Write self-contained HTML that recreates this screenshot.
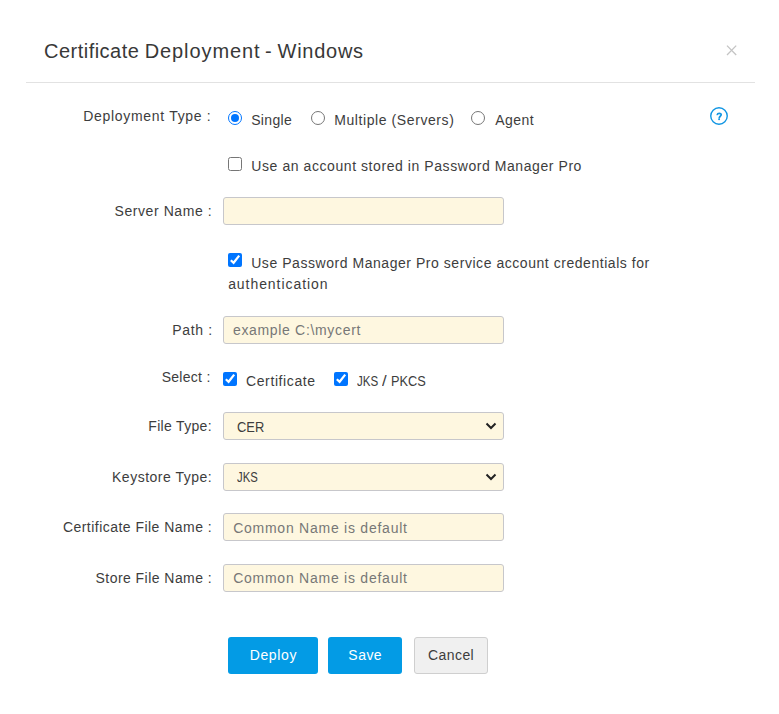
<!DOCTYPE html>
<html><head><meta charset="utf-8">
<style>
html,body{margin:0;padding:0;background:#fff;width:779px;height:714px;overflow:hidden}
body{position:relative;font-family:"Liberation Sans",sans-serif;color:#333}
.t{position:absolute;white-space:nowrap;line-height:20px;font-size:14px}
.box{position:absolute;left:223px;width:279px;height:26px;border:1px solid #c7c7cb;border-radius:3px;background:#fef7e0}
.cb{position:absolute;margin:0;width:14px;height:14px}
.btn{position:absolute;top:637px;height:37px;border-radius:3px;background:#039be5}
.sep{position:absolute;left:26px;top:82px;width:729px;height:1px;background:#e2e2e2}
</style></head><body>
<svg class="nt " style="position:absolute;left:726px;top:45px;display:block" width="11" height="11" viewBox="0 0 11 11"><path d="M1 0.6L10.2 10M10.2 0.6L1 10" stroke="#c4c4c4" stroke-width="1.3"/></svg>
<div class="nt sep"></div>
<svg class="nt " style="position:absolute;left:709.7px;top:106.9px;display:block" width="18" height="18" viewBox="0 0 18 18"><circle cx="9" cy="9" r="8.25" fill="none" stroke="#1296e3" stroke-width="1.4"/><path d="M7.3 7.5C7.5 6.1 11.3 5.8 11.2 7.7C11.1 8.9 9.6 9.3 9.3 10.7" fill="none" stroke="#1296e3" stroke-width="1.7" stroke-linecap="round"/><circle cx="9.1" cy="12.3" r="0.95" fill="#1296e3"/></svg>
<svg class="nt cb" style="left:228px;top:111px" width="14" height="14" viewBox="0 0 14 14"><circle cx="7" cy="7" r="6.5" fill="none" stroke="#0075ff" stroke-width="1"/><circle cx="7" cy="7" r="4" fill="#0075ff"/></svg>
<svg class="nt cb" style="left:311px;top:111px" width="14" height="14" viewBox="0 0 14 14"><circle cx="7" cy="7" r="6.5" fill="none" stroke="#767676" stroke-width="1"/></svg>
<svg class="nt cb" style="left:471px;top:111px" width="14" height="14" viewBox="0 0 14 14"><circle cx="7" cy="7" r="6.5" fill="none" stroke="#767676" stroke-width="1"/></svg>
<svg class="nt cb" style="left:228px;top:157px" width="14" height="14" viewBox="0 0 14 14"><rect x="0.5" y="0.5" width="13" height="13" rx="2" fill="#fff" stroke="#767676" stroke-width="1"/></svg>
<svg class="nt cb" style="left:228px;top:253px" width="14" height="14" viewBox="0 0 14 14"><rect width="14" height="14" rx="2" fill="#0075ff"/><path d="M2.8 7.2L5.6 9.8L11.2 2.6" fill="none" stroke="#fff" stroke-width="2.2"/></svg>
<svg class="nt cb" style="left:223px;top:372px" width="14" height="14" viewBox="0 0 14 14"><rect width="14" height="14" rx="2" fill="#0075ff"/><path d="M2.8 7.2L5.6 9.8L11.2 2.6" fill="none" stroke="#fff" stroke-width="2.2"/></svg>
<svg class="nt cb" style="left:334px;top:372px" width="14" height="14" viewBox="0 0 14 14"><rect width="14" height="14" rx="2" fill="#0075ff"/><path d="M2.8 7.2L5.6 9.8L11.2 2.6" fill="none" stroke="#fff" stroke-width="2.2"/></svg>
<div class="nt box" style="top:197px"></div>
<div class="nt box" style="top:316px"></div>
<div class="nt box" style="top:412px"></div>
<div class="nt box" style="top:463px"></div>
<div class="nt box" style="top:513px"></div>
<div class="nt box" style="top:564px"></div>
<svg class="nt " style="position:absolute;left:485px;top:421px" width="12" height="9" viewBox="0 0 12 9"><path d="M1.5 2.5L6 7L10.5 2.5" fill="none" stroke="#222" stroke-width="2"/></svg>
<svg class="nt " style="position:absolute;left:485px;top:472px" width="12" height="9" viewBox="0 0 12 9"><path d="M1.5 2.5L6 7L10.5 2.5" fill="none" stroke="#222" stroke-width="2"/></svg>
<div class="nt btn" style="left:228px;width:90px"></div>
<div class="nt btn" style="left:328px;width:74px"></div>
<div class="nt btn" style="left:414px;width:72px;height:35px;background:#f0f0f0;border:1px solid #cfcfcf"></div>
<div id="t_w1" class="t" style="left:44.00px;top:36.00px;font-size:20px;line-height:30px;color:#383838;letter-spacing:0.482px">Certificate</div>
<div id="t_w2" class="t" style="left:144.64px;top:36.00px;font-size:20px;line-height:30px;color:#383838;letter-spacing:0.925px">Deployment</div>
<div id="t_w3" class="t" style="left:265.00px;top:36.00px;font-size:20px;line-height:30px;color:#383838;transform:scaleX(1.0000);transform-origin:0 0">-</div>
<div id="t_w4" class="t" style="left:277.60px;top:36.00px;font-size:20px;line-height:30px;color:#383838;letter-spacing:0.730px">Windows</div>
<div id="l_dep" class="t" style="left:83.32px;top:106.00px;font-size:14px;line-height:20px;color:#3d3d3d;letter-spacing:0.686px">Deployment Type :</div>
<div id="r_single" class="t" style="left:251.18px;top:110.00px;font-size:14px;line-height:20px;color:#3d3d3d;letter-spacing:0.352px">Single</div>
<div id="r_multi" class="t" style="left:334.18px;top:110.00px;font-size:14px;line-height:20px;color:#3d3d3d;letter-spacing:0.589px">Multiple (Servers)</div>
<div id="r_agent" class="t" style="left:495.18px;top:110.00px;font-size:14px;line-height:20px;color:#3d3d3d;letter-spacing:0.500px">Agent</div>
<div id="c_acct" class="t" style="left:251.36px;top:156.00px;font-size:14px;line-height:20px;color:#3d3d3d;letter-spacing:0.568px">Use an account stored in Password Manager Pro</div>
<div id="l_srv" class="t" style="left:114.50px;top:201.00px;font-size:14px;line-height:20px;color:#3d3d3d;letter-spacing:0.576px">Server Name :</div>
<div id="c_svc" class="t" style="left:251.22px;top:253.00px;font-size:14px;line-height:20px;color:#3d3d3d;letter-spacing:0.545px">Use Password Manager Pro service account credentials for</div>
<div id="c_auth" class="t" style="left:228.14px;top:274.00px;font-size:14px;line-height:20px;color:#3d3d3d;letter-spacing:0.943px">authentication</div>
<div id="l_path" class="t" style="left:172.22px;top:320.00px;font-size:14px;line-height:20px;color:#3d3d3d;letter-spacing:0.672px">Path :</div>
<div id="p_path" class="t" style="left:232.96px;top:320.00px;font-size:14px;line-height:20px;color:#777;letter-spacing:0.670px">example C:\mycert</div>
<div id="l_sel" class="t" style="left:161.68px;top:367.00px;font-size:14px;line-height:20px;color:#3d3d3d;letter-spacing:0.284px">Select :</div>
<div id="c_cert" class="t" style="left:246.00px;top:371.00px;font-size:14px;line-height:20px;color:#3d3d3d;letter-spacing:0.612px">Certificate</div>
<div id="c_jks1" class="t" style="left:356.77px;top:371.00px;font-size:14px;line-height:20px;color:#3d3d3d;transform:scaleX(0.8259);transform-origin:0 0">JKS</div>
<div id="c_jks2" class="t" style="left:382.40px;top:371.00px;font-size:14px;line-height:20px;color:#3d3d3d;transform:scaleX(1.1905);transform-origin:0 0">/</div>
<div id="c_jks3" class="t" style="left:390.98px;top:371.00px;font-size:14px;line-height:20px;color:#3d3d3d;transform:scaleX(0.9125);transform-origin:0 0">PKCS</div>
<div id="l_ft" class="t" style="left:148.32px;top:416.00px;font-size:14px;line-height:20px;color:#3d3d3d;letter-spacing:0.314px">File Type:</div>
<div id="s_cer" class="t" style="left:237.07px;top:417.00px;font-size:14px;line-height:20px;color:#3d3d3d;transform:scaleX(0.9206);transform-origin:0 0">CER</div>
<div id="l_ks" class="t" style="left:112.04px;top:467.00px;font-size:14px;line-height:20px;color:#3d3d3d;letter-spacing:0.496px">Keystore Type:</div>
<div id="s_jks" class="t" style="left:237.16px;top:467.00px;font-size:14px;line-height:20px;color:#3d3d3d;transform:scaleX(0.8077);transform-origin:0 0">JKS</div>
<div id="l_cfn" class="t" style="left:62.92px;top:517.00px;font-size:14px;line-height:20px;color:#3d3d3d;letter-spacing:0.469px">Certificate File Name :</div>
<div id="p_cfn" class="t" style="left:233.14px;top:518.00px;font-size:14px;line-height:20px;color:#777;letter-spacing:0.755px">Common Name is default</div>
<div id="l_sfn" class="t" style="left:95.54px;top:568.00px;font-size:14px;line-height:20px;color:#3d3d3d;letter-spacing:0.453px">Store File Name :</div>
<div id="p_sfn" class="t" style="left:233.14px;top:568.00px;font-size:14px;line-height:20px;color:#777;letter-spacing:0.755px">Common Name is default</div>
<div id="b_dep" class="t" style="left:249.68px;top:645.00px;font-size:14px;line-height:20px;color:#fff;letter-spacing:0.648px">Deploy</div>
<div id="b_save" class="t" style="left:348.36px;top:645.00px;font-size:14px;line-height:20px;color:#fff;letter-spacing:0.457px">Save</div>
<div id="b_can" class="t" style="left:428.10px;top:645.00px;font-size:14px;line-height:20px;color:#3d3d3d;letter-spacing:0.408px">Cancel</div>
</body></html>
